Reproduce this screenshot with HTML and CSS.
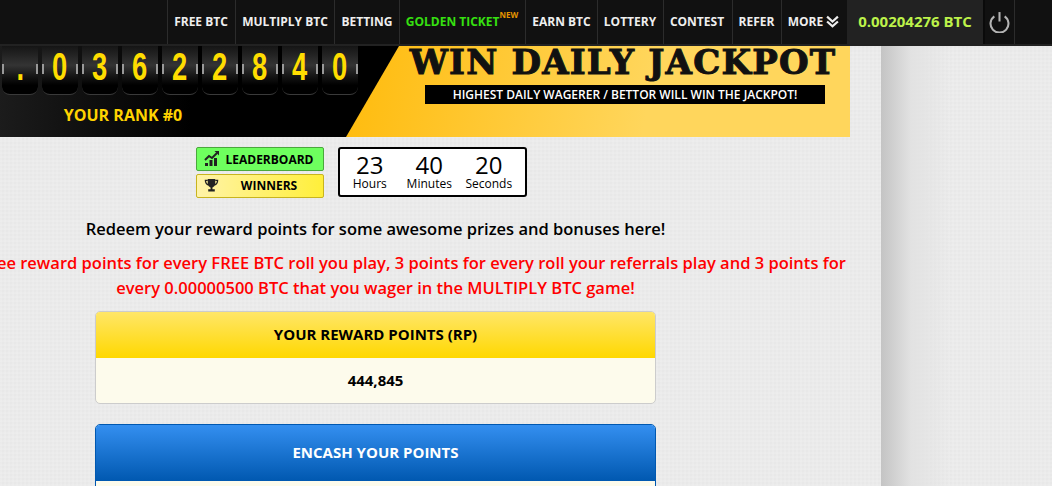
FILE: index.html
```html
<!DOCTYPE html>
<html lang="en">
<head>
    <meta charset="UTF-8">
    <meta name="viewport" content="width=device-width, initial-scale=1.0">
    <title>Reward Points</title>
    <link rel="stylesheet" href="styles.css">
</head>
<body>
    <!-- top nav -->
    <nav class="top-bar">
        <a class="nav-item nav-free">FREE BTC</a>
        <a class="nav-item nav-multiply">MULTIPLY BTC</a>
        <a class="nav-item nav-betting">BETTING</a>
        <a class="nav-item nav-golden">GOLDEN TICKET<sup class="new-tag">NEW</sup></a>
        <a class="nav-item nav-earn">EARN BTC</a>
        <a class="nav-item nav-lottery">LOTTERY</a>
        <a class="nav-item nav-contest">CONTEST</a>
        <a class="nav-item nav-refer">REFER</a>
        <a class="nav-item nav-more">MORE
            <svg class="more-icon" viewBox="0 0 12 12" width="13" height="13"><path d="M1 1.500 6 6l5-4.500M1 6l5 4.500L11 6" fill="none" stroke="#eee" stroke-width="2"/></svg>
        </a>
        <div class="nav-balance">0.00204276 BTC</div>
        <a class="nav-item nav-power">
            <svg viewBox="0 0 20 20" width="23" height="23"><path d="M5.500 5.500a7.800 7.800 0 1 0 9 0" fill="none" stroke="#b4b4b4" stroke-width="1.800"/><path d="M10 1.800v8.200" fill="none" stroke="#b4b4b4" stroke-width="1.800"/></svg>
        </a>
    </nav>

    <div class="layout">
        <main class="main-col">
            <div class="main-inner">
                <section class="hero">
                    <div class="hero-left">
                        <div class="flip-row">
                            <div class="flip"><span>.</span></div>
                            <div class="flip"><span>0</span></div>
                            <div class="flip"><span>3</span></div>
                            <div class="flip"><span>6</span></div>
                            <div class="flip"><span>2</span></div>
                            <div class="flip"><span>2</span></div>
                            <div class="flip"><span>8</span></div>
                            <div class="flip"><span>4</span></div>
                            <div class="flip"><span>0</span></div>
                        </div>
                        <div class="rank">YOUR RANK #0</div>
                    </div>
                    <div class="hero-right">
                        <h1 class="jackpot-title">WIN DAILY JACKPOT</h1>
                        <div class="jackpot-sub">HIGHEST DAILY WAGERER / BETTOR WILL WIN THE JACKPOT!</div>
                    </div>
                </section>

                <section class="board-row">
                    <div class="board-btns">
                        <a class="board-btn btn-leader">
                            <svg viewBox="0 0 16 16" width="16" height="16"><path d="M1 15v-3h3v3zM5.500 15V9h3v6zM10 15V7h3v8z" fill="#222"/><path d="M1 9l4-4 3 2 5-5" fill="none" stroke="#222" stroke-width="2"/><path d="M10.500 0H15v4.500z" fill="#222"/></svg>
                            <span>LEADERBOARD</span>
                        </a>
                        <a class="board-btn btn-winners">
                            <svg viewBox="0 0 16 16" width="15" height="15"><path d="M4 1h8v5c0 2-2 3.500-3 4v2h2.500v2.500h-7V12H7v-2C6 9.500 4 8 4 6z" fill="#222"/><path d="M4 2.500H1.500c0 3 1 4.500 3.500 5M12 2.500h2.500c0 3-1 4.500-3.500 5" fill="none" stroke="#222" stroke-width="1.400"/></svg>
                            <span>WINNERS</span>
                        </a>
                    </div>
                    <div class="countdown">
                        <div class="count-cell"><b>23</b><small>Hours</small></div>
                        <div class="count-cell"><b>40</b><small>Minutes</small></div>
                        <div class="count-cell"><b>20</b><small>Seconds</small></div>
                    </div>
                </section>

                <p class="redeem-text">Redeem your reward points for some awesome prizes and bonuses here!</p>
                <p class="earn-text">Users get free reward points for every FREE BTC roll you play, 3 points for every roll your referrals play and 3 points for every 0.00000500 BTC that you wager in the MULTIPLY BTC game!</p>

                <section class="points-box">
                    <div class="box-head head-yellow">YOUR REWARD POINTS (RP)</div>
                    <div class="box-body">444,845</div>
                </section>

                <section class="points-box box-blue">
                    <div class="box-head head-blue">ENCASH YOUR POINTS</div>
                    <div class="box-body">&nbsp;</div>
                </section>
            </div>
        </main>
        <aside class="side-col"></aside>
    </div>
</body>
</html>
```

FILE: styles.css
```css
html, body {
    margin: 0;
    padding: 0;
    height: 486px;
    overflow: hidden;
}
body {
    font-family: 'Open Sans', sans-serif;
    background-color: #e8e8e8;
    background-image:
        repeating-linear-gradient(to right, rgba(255,255,255,.12) 0 2px, transparent 2px 4px),
        repeating-linear-gradient(to bottom, rgba(255,255,255,.12) 0 2px, transparent 2px 4px);
    color: #000;
}

/* top bar */
.top-bar {
    display: flex;
    justify-content: flex-start;
    height: 44px;
    padding-left: 167px;
    background-color: #111;
    border-bottom: 2px solid #222;
}
.nav-item {
    display: flex;
    align-items: center;
    justify-content: center;
    box-sizing: border-box;
    padding-bottom: 2px;
    border-left: 1px solid #2c2c2c;
    color: #eee;
    font-size: 12px;
    font-weight: 700;
    white-space: nowrap;
}
.nav-free { width: 68px; padding-right: 1px; }
.nav-multiply { width: 99px; }
.nav-betting { width: 65px; }
.nav-golden { width: 126px; padding-right: 1px; color: #36e010; }
.nav-earn { width: 72px; }
.nav-lottery { width: 66px; padding-right: 1px; }
.nav-contest { width: 69px; padding-right: 2px; }
.nav-refer { width: 49px; padding-right: 1px; }
.nav-more { width: 66px; padding-right: 2px; gap: 3px; }
.nav-power { width: 32px; border-left: 2px solid #0a0a0a; border-right: 1px solid #2c2c2c; }
.new-tag {
    align-self: flex-start;
    margin: 11px 0 0 0;
    color: #e59400;
    font-size: 8px;
    line-height: 1;
}
.nav-balance {
    display: flex;
    align-items: center;
    justify-content: center;
    width: 136px;
    padding-bottom: 2px;
    box-sizing: border-box;
    background-color: #222;
    color: #bdf24a;
    font-size: 15px;
    font-weight: 700;
}

/* page columns */
.layout {
    display: flex;
    height: 440px;
}
.main-col {
    width: 881px;
    overflow: hidden;
}
.main-inner {
    width: 949px;
    margin-left: -99px;
}
.side-col {
    flex: 1;
    background: linear-gradient(to right, #c4c4c4, #e2e2e2 30px, rgba(232,232,232,0) 70px);
}

/* hero banner */
.hero {
    display: flex;
    height: 91px;
    background: linear-gradient(to right, #2a2a2a, #000 290px);
}
.hero-left {
    width: 445px;
    flex-shrink: 0;
}
.flip-row {
    display: flex;
    gap: 4px;
    padding-left: 101px;
}
.flip {
    flex: none;
    position: relative;
    box-sizing: border-box;
    width: 36px;
    height: 49px;
    border-bottom: 1px solid #3a3a3a;
    border-radius: 0 0 8px 8px;
    background: linear-gradient(to bottom, #151515, #343434 40%, #161616 62%, #000 82%);
    color: #ffdd00;
    font-family: 'Liberation Sans', sans-serif;
    font-size: 38px;
    font-weight: 700;
    line-height: 42px;
    text-align: center;
}
.flip span {
    display: inline-block;
    transform: scaleX(.72);
}
.flip::before,
.flip::after {
    content: "";
    position: absolute;
    top: 18px;
    width: 2px;
    height: 10px;
    background-color: #999;
}
.flip::before { left: 0; }
.flip::after { right: 0; }
.rank {
    width: 246px;
    margin: 9px 0 0 99px;
    color: #ffd300;
    font-size: 16px;
    font-weight: 700;
    text-align: center;
}
.hero-right {
    flex: 1;
    box-sizing: border-box;
    padding-left: 54px;
    background: linear-gradient(100deg, #ffbb0c, #ffd65c 60%);
    clip-path: polygon(53px 0, 100% 0, 100% 100%, 0 100%);
    display: flex;
    flex-direction: column;
    align-items: center;
}
.jackpot-title {
    margin: 0 4px 0 0;
    color: #111;
    font-family: 'DejaVu Serif', serif;
    font-size: 34px;
    font-weight: 700;
    letter-spacing: 1.200px;
    line-height: 32px;
    white-space: nowrap;
    -webkit-text-stroke: 1px #111;
}
.jackpot-sub {
    width: 400px;
    margin-top: 7px;
    background-color: #000;
    color: #fff;
    font-size: 12px;
    font-weight: 600;
    line-height: 19px;
    text-align: center;
}

/* leaderboard + countdown */
.board-row {
    display: flex;
    gap: 14px;
    margin-top: 10px;
    padding-left: 295px;
}
.board-btns {
    display: flex;
    flex-direction: column;
    gap: 3px;
}
.board-btn {
    display: flex;
    align-items: center;
    box-sizing: border-box;
    width: 128px;
    height: 24px;
    padding: 0 4px 0 7px;
    border-radius: 2px;
    font-size: 12px;
    font-weight: 700;
}
.board-btn span {
    flex: 1;
    text-align: center;
}
.btn-leader {
    background-color: #6eff5e;
    border: 1px solid #4aa83c;
}
.btn-winners {
    padding-bottom: 1px;
    background: linear-gradient(to right, #fff3a8, #ffef3a);
    border: 1px solid #c8b41e;
}
.countdown {
    display: flex;
    box-sizing: border-box;
    width: 189px;
    height: 50px;
    padding-top: 4px;
    background-color: #fff;
    border: 2px solid #000;
    border-radius: 3px;
}
.count-cell {
    display: flex;
    flex-direction: column;
    align-items: center;
    width: 59.500px;
}
.count-cell b {
    font-size: 24px;
    font-weight: 400;
    line-height: 24px;
}
.count-cell small {
    font-size: 12px;
    line-height: 13px;
}

/* text */
.redeem-text {
    margin: 20px 0 0;
    font-size: 16.500px;
    font-weight: 600;
    line-height: 22px;
    text-align: center;
}
.earn-text {
    margin: 10px 0 0;
    color: #f00;
    font-size: 16.500px;
    font-weight: 600;
    line-height: 25px;
    text-align: center;
}

/* points boxes */
.points-box {
    box-sizing: border-box;
    width: 561px;
    margin: 11px auto 0;
    overflow: hidden;
    background-color: #fdfbec;
    border: 1px solid #ccc;
    border-radius: 5px;
}
.box-head {
    height: 46px;
    font-size: 15px;
    font-weight: 700;
    line-height: 44px;
    text-align: center;
}
.head-yellow {
    background: linear-gradient(to bottom, #ffe668, #ffd800);
}
.head-blue {
    height: 56px;
    line-height: 54px;
    background: linear-gradient(to bottom, #348ff0, #0058b0);
    color: #fff;
}
.box-body {
    height: 45px;
    font-size: 15px;
    font-weight: 700;
    line-height: 45px;
    text-align: center;
}
.box-blue {
    margin-top: 20px;
    border-color: #0058b0;
}
```
